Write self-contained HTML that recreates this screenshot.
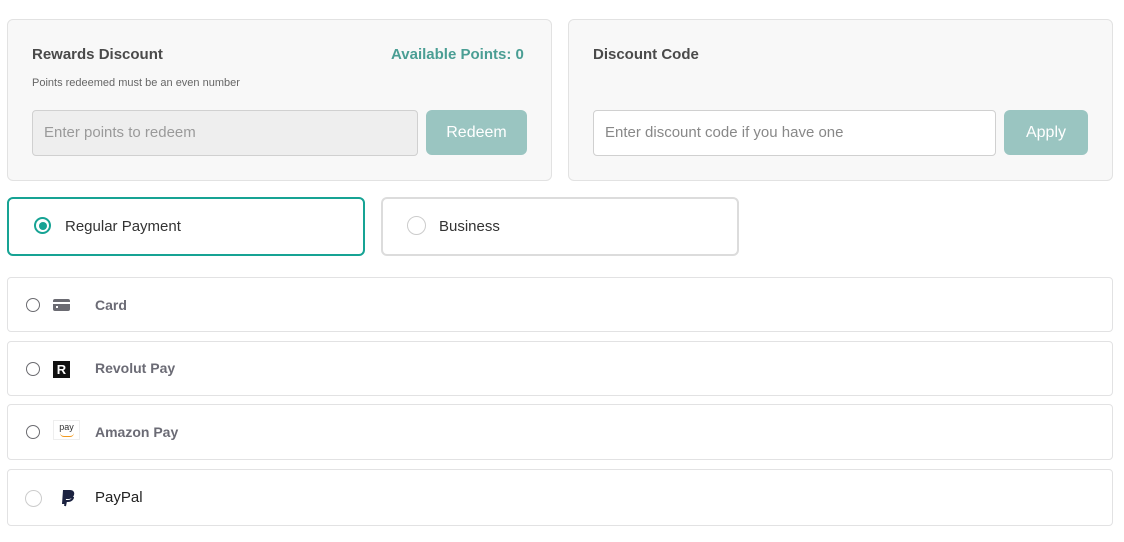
<!DOCTYPE html>
<html><head><style>
body{margin:0;width:1124px;height:542px;background:#fff;font-family:"Liberation Sans",sans-serif;position:relative;overflow:hidden}
.abs{position:absolute;box-sizing:border-box}
.panel{background:#f8f8f8;border:1px solid #e2e2e2;border-radius:6px}
.h{font-size:15px;font-weight:bold;color:#4a4a4a}
.inp{border:1px solid #d0d0d0;border-radius:4px;font-size:15px;color:#9a9a9a;padding-left:11px;line-height:44px}
.btn{background:#9ac5c1;border-radius:6px;color:#fff;font-size:16px;text-align:center;line-height:46px}
.opt{border:1px solid #dcdcdc;border-radius:6px;background:#fff}
.row{border:1px solid #e2e2e3;border-radius:4px;background:#fff;left:7px;width:1106px}
.rad{position:absolute;width:12px;height:12px;border:1.5px solid #6b6b70;border-radius:50%;left:18px}
.lbl{position:absolute;left:87px;font-size:14px;font-weight:bold;color:#6b6b75}
</style></head><body>
<div class="abs panel" style="left:7px;top:19px;width:545px;height:162px"></div>
<div class="abs h" style="left:32px;top:46px">Rewards Discount</div>
<div class="abs h" style="left:391px;top:46px;color:#4a9e94">Available Points: 0</div>
<div class="abs" style="left:32px;top:77px;font-size:11px;color:#666">Points redeemed must be an even number</div>
<div class="abs inp" style="left:32px;top:110px;width:386px;height:46px;background:#eeeeee">Enter points to redeem</div>
<div class="abs btn" style="left:426px;top:110px;width:101px;height:45px">Redeem</div>

<div class="abs panel" style="left:568px;top:19px;width:545px;height:162px"></div>
<div class="abs h" style="left:593px;top:46px">Discount Code</div>
<div class="abs inp" style="left:593px;top:110px;width:403px;height:46px;background:#fff;color:#888">Enter discount code if you have one</div>
<div class="abs btn" style="left:1004px;top:110px;width:84px;height:45px">Apply</div>

<div class="abs opt" style="left:7px;top:197px;width:358px;height:59px;border:2px solid #16a394"></div>
<div class="abs" style="left:34px;top:217px;width:17px;height:17px;border:2px solid #16a394;border-radius:50%;box-sizing:border-box"><div style="position:absolute;left:2.5px;top:2.5px;width:8px;height:8px;background:#16a394;border-radius:50%"></div></div>
<div class="abs" style="left:65px;top:218px;font-size:15px;color:#333">Regular Payment</div>
<div class="abs opt" style="left:381px;top:197px;width:358px;height:59px;border:2px solid #dcdcdc"></div>
<div class="abs" style="left:407px;top:216px;width:19px;height:19px;border:1.5px solid #ccc;border-radius:50%"></div>
<div class="abs" style="left:439px;top:218px;font-size:15px;color:#333">Business</div>

<div class="abs row" style="top:277px;height:55px"><div class="rad" style="top:20px"></div>
<div style="position:absolute;left:45px;top:21px;width:17px;height:12px;background:#6b6b72;border-radius:2px"><div style="position:absolute;left:0;top:3px;width:17px;height:2px;background:#fff"></div><div style="position:absolute;left:3px;top:7px;width:2px;height:2px;background:#fff"></div></div>
<div class="lbl" style="top:19px">Card</div></div>

<div class="abs row" style="top:341px;height:55px"><div class="rad" style="top:20px"></div>
<div style="position:absolute;left:45px;top:19px;width:17px;height:17px;background:#111;color:#fff;font-weight:bold;font-size:13px;text-align:center;line-height:17px">R</div>
<div class="lbl" style="top:18px">Revolut Pay</div></div>

<div class="abs row" style="top:404px;height:56px"><div class="rad" style="top:20px"></div>
<div style="position:absolute;left:45px;top:15px;width:25px;height:18px;border:1px solid #eee;font-size:9px;color:#333;text-align:center;line-height:12px">pay<div style="margin:0 auto;width:14px;height:3px;border-bottom:1.5px solid #f29a1e;border-radius:0 0 8px 8px"></div></div>
<div class="lbl" style="top:19px">Amazon Pay</div></div>

<div class="abs row" style="top:469px;height:57px"><div class="rad" style="top:20px;width:15px;height:15px;border-color:#ccc;left:17px"></div>
<svg style="position:absolute;left:52px;top:20px" width="16" height="17" viewBox="0 0 16 17"><path d="M3 0h7c3 0 5 2 4 5s-3 4-6 4H6l-1 5H2z" fill="#1b2240"/><path d="M5 16l1-5h2c3 0 5-2 5-4" stroke="#1b2240" stroke-width="2" fill="none"/></svg>
<div class="lbl" style="top:19px;font-weight:normal;color:#222;font-size:15px">PayPal</div></div>
</body></html>
